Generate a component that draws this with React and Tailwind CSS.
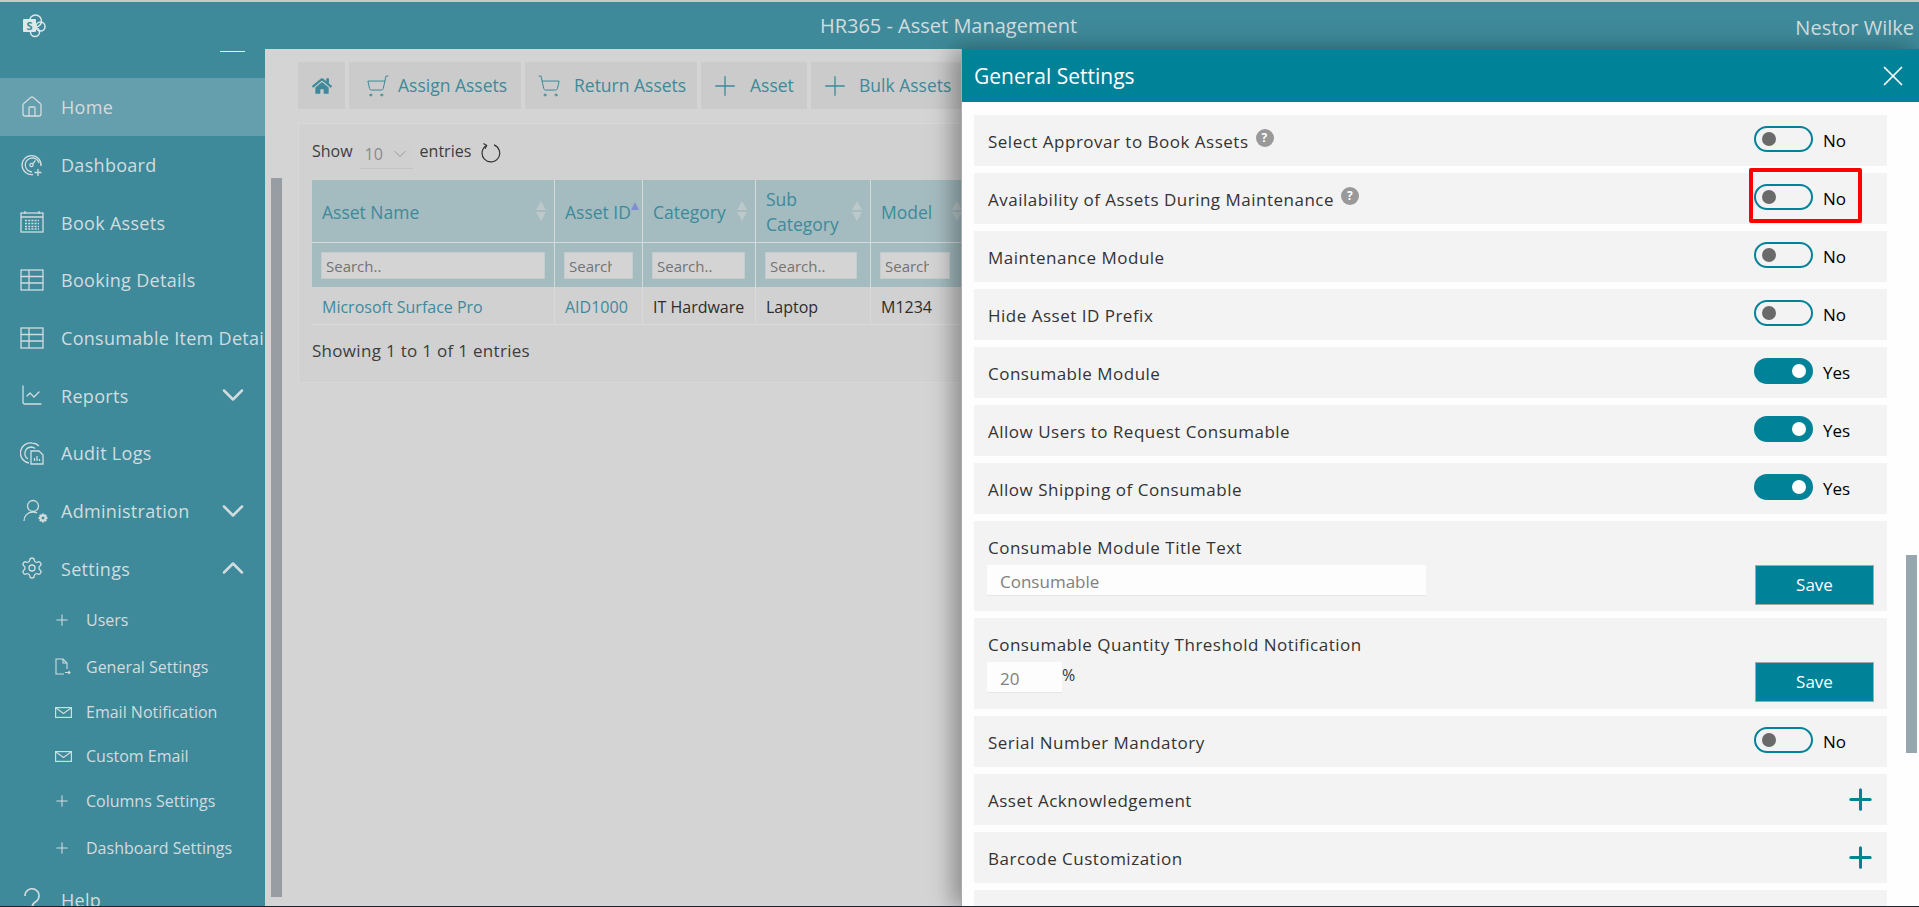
import { ChevronDown, ChevronUp, House, LineChart, Plus, Settings, ShoppingCart, X } from "lucide-react";
import { FaHome } from "react-icons/fa";

const font = { fontFamily: '"Open Sans", "Noto Sans", sans-serif' };

function DashIcon() {
  return (
    <svg width="24" height="24" viewBox="0 0 24 24" fill="none" stroke="currentColor" strokeWidth="1.3">
      <path d="M21 13a9.5 9.5 0 1 0-8 8.5" />
      <path d="M19 10a7 7 0 1 0-7 9" />
      <circle cx="11.5" cy="12" r="1.6" />
      <path d="M12.5 11l3-3.5M18 16v7M14.5 19.5h7" />
    </svg>
  );
}

function CalIcon() {
  return (
    <svg width="24" height="24" viewBox="0 0 24 24" fill="none" stroke="currentColor" strokeWidth="1.3">
      <rect x="1" y="3" width="22" height="19" />
      <path d="M1 7h22M5 1v3M19 1v3" />
      <path d="M5 10.5h14M5 13.5h14M5 16.5h14M5 19h14" strokeDasharray="2 1.2" />
    </svg>
  );
}

function GridIcon() {
  return (
    <svg width="24" height="24" viewBox="0 0 24 24" fill="none" stroke="currentColor" strokeWidth="1.3">
      <rect x="1" y="2" width="22" height="20" />
      <path d="M1 8.5h22M1 15h22M9 2v20" />
    </svg>
  );
}

function AuditIcon() {
  return (
    <svg width="24" height="24" viewBox="0 0 24 24" fill="none" stroke="currentColor" strokeWidth="1.3">
      <path d="M9 22A10 10 0 0 1 12 2c3 0 5 1 7 3" />
      <path d="M8 18a6.5 6.5 0 0 1 3-12c2 0 3 .5 4 1.5" />
      <path d="M11 10h8l4 4v9H11z" />
      <path d="M14.5 20v-3M17 20v-5M19.5 20v-2" />
    </svg>
  );
}

function AdminIcon() {
  return (
    <svg width="26" height="24" viewBox="0 0 26 24" fill="none" stroke="currentColor" strokeWidth="1.3" className="ml-[3px]">
      <circle cx="10" cy="7" r="5.5" />
      <path d="M1 22c0-5 3.5-9 9-9 1.500 0 2.800.3 4 .8" />
      <circle cx="20" cy="19" r="2.600" strokeWidth="2.200" />
      <path d="M20 14.500v1.500M20 22v1.500M15.500 19H17M23 19h1.500M16.800 15.800l1 1M22.200 21.200l1 1M23.200 15.800l-1 1M17.800 21.200l-1 1" strokeWidth="1.800" />
    </svg>
  );
}

function HelpIcon() {
  return (
    <svg width="24" height="24" viewBox="0 0 24 24" fill="none" stroke="currentColor" strokeWidth="1.6">
      <path d="M5 8a7 7 0 1 1 11 5.5c-2.500 1.500-4 3-4 6M12 22v2" />
    </svg>
  );
}

function DocIcon() {
  return (
    <svg width="16" height="17" viewBox="0 0 16 17" fill="none" stroke="currentColor" strokeWidth="1.1">
      <path d="M12 11V5L8 1H1v15h8" />
      <path d="M8 1v4h4M10 14.500h5M13.500 13l1.500 1.500-1.500 1.500" />
    </svg>
  );
}

function MailIcon() {
  return (
    <svg width="17" height="11" viewBox="0 0 17 11" fill="none" stroke="currentColor" strokeWidth="1.200">
      <rect x="0.600" y="0.600" width="15.800" height="9.800" />
      <path d="M1 1l7.500 5.500L16 1" />
    </svg>
  );
}

function Logo() {
  return (
    <svg width="24" height="24" viewBox="0 0 24 24" className="text-[#dfe7e9]">
      <circle cx="13.500" cy="7" r="6" fill="none" stroke="currentColor" strokeWidth="1.500" />
      <circle cx="18.500" cy="12.500" r="4.500" fill="none" stroke="currentColor" strokeWidth="1.500" />
      <circle cx="13" cy="18" r="4.500" fill="none" stroke="currentColor" strokeWidth="1.500" />
      <rect x="1" y="5" width="13" height="13" rx="1" fill="currentColor" />
      <text x="7.500" y="15.500" textAnchor="middle" fontSize="11" fontWeight="700" fill="#3e8a9a" style={font}>S</text>
    </svg>
  );
}

const navItems = [
  { label: "Home", icon: <House size={24} strokeWidth={1.3} />, active: true },
  { label: "Dashboard", icon: <DashIcon /> },
  { label: "Book Assets", icon: <CalIcon /> },
  { label: "Booking Details", icon: <GridIcon /> },
  { label: "Consumable Item Details", icon: <GridIcon /> },
  { label: "Reports", icon: <LineChart size={24} strokeWidth={1.3} />, arrow: "down" },
  { label: "Audit Logs", icon: <AuditIcon /> },
  { label: "Administration", icon: <AdminIcon />, arrow: "down" },
  { label: "Settings", icon: <Settings size={24} strokeWidth={1.3} />, arrow: "up" },
];

const subPlus = <Plus size={18} strokeWidth={1.4} className="-ml-[2px]" />;

const subItems = [
  { label: "Users", icon: subPlus, h: "h-[46px]" },
  { label: "General Settings", icon: <DocIcon />, h: "h-[47px]" },
  { label: "Email Notification", icon: <MailIcon />, h: "h-[44px]" },
  { label: "Custom Email", icon: <MailIcon />, h: "h-[44px]" },
  { label: "Columns Settings", icon: subPlus, h: "h-[46px]" },
  { label: "Dashboard Settings", icon: subPlus, h: "h-[48px]" },
];

function Sidebar() {
  return (
    <aside className="w-[265px] shrink-0 bg-[#3e8a9a] text-[#d2dcdf] overflow-hidden">
      <div className="h-[29px] flex justify-end pr-[20px] pt-[2px]">
        <div className="w-[25px] h-px bg-[#e8eeef]" />
      </div>
      {navItems.map((item) => (
        <div
          key={item.label}
          className={`h-[57.7px] flex items-center pl-[20px] whitespace-nowrap ${item.active ? "bg-[#659fad]" : ""}`}
        >
          <span className="w-[41px] shrink-0">{item.icon}</span>
          <span className="text-[18px] tracking-[0.3px] flex-1 pt-[2px]">{item.label}</span>
          {item.arrow === "down" && <ChevronDown size={36} strokeWidth={1.7} className="shrink-0 mr-[14px]" />}
          {item.arrow === "up" && <ChevronUp size={36} strokeWidth={1.7} className="shrink-0 mr-[14px]" />}
        </div>
      ))}
      {subItems.map((item) => (
        <div key={item.label} className={`${item.h} flex items-center pl-[55px] whitespace-nowrap`}>
          <span className="w-[31px] shrink-0">{item.icon}</span>
          <span className="text-[16px]">{item.label}</span>
        </div>
      ))}
      <div className="h-[40px] flex items-center pl-[20px] pt-[16px]">
        <span className="w-[41px] shrink-0"><HelpIcon /></span>
        <span className="text-[18px] tracking-[0.3px]">Help</span>
      </div>
    </aside>
  );
}

function ToolButton({ icon, label, w }) {
  return (
    <div className={`${w} shrink-0 h-[47px] bg-[#cbcbcb] flex items-center text-[#3e8a9a] whitespace-nowrap`}>
      {icon}
      <span className="text-[17.5px]">{label}</span>
    </div>
  );
}

function SortArrows() {
  return (
    <span className="flex flex-col gap-[2px] shrink-0">
      <span className="w-0 h-0 border-x-[5px] border-x-transparent border-b-[9px] border-b-[#bcc8ca]" />
      <span className="w-0 h-0 border-x-[5px] border-x-transparent border-t-[9px] border-t-[#bcc8ca]" />
    </span>
  );
}

const columns = [
  { title: "Asset Name", w: "w-[243px]", input: "w-[224px]", value: "Microsoft Surface Pro", link: true },
  { title: "Asset ID", w: "w-[88px]", input: "w-[69px]", value: "AID1000", link: true, asc: true },
  { title: "Category", w: "w-[113px]", input: "w-[93px]", value: "IT Hardware" },
  { title: "Sub Category", w: "w-[115px]", input: "w-[92px]", value: "Laptop" },
  { title: "Model", w: "w-[100px]", input: "w-[70px]", value: "M1234" },
];

function AssetTable() {
  return (
    <div className="flex">
      {columns.map((col) => (
        <div key={col.title} className={`${col.w} shrink-0 border-r border-[#d5dadb] flex flex-col`}>
          <div className="h-[63px] bg-[#a4bcc0] border-b border-[#d5dadb] flex items-center justify-between pl-[10px] pr-[8px] text-[17.5px] text-[#3e8a9a] leading-[25px]">
            {col.title === "Sub Category" ? (
              <span className="w-min pt-[2px]">{col.title}</span>
            ) : (
              <span className="whitespace-nowrap pt-[2px]">{col.title}</span>
            )}
            {col.asc ? (
              <span className="w-0 h-0 mb-[10px] border-x-[4px] border-x-transparent border-b-[8px] border-b-[#7f8fd0]" />
            ) : (
              <SortArrows />
            )}
          </div>
          <div className="h-[44px] bg-[#a4bcc0] flex items-center pl-[9px]">
            <div className={`${col.input} h-[27px] bg-[#d4d4d4] border border-[#c4cccd] pl-[4px] pr-[20px] pt-[1px] text-[15px] text-[#737373] leading-[25px]`}>
              <div className="overflow-hidden whitespace-nowrap">Search..</div>
            </div>
          </div>
          <div className={`h-[38px] bg-[#d1d1d1] border-b border-[#dadada] flex items-center pl-[10px] pt-[2px] text-[16px] whitespace-nowrap ${col.link ? "text-[#3e8a9a]" : "text-[#2d2d2d]"}`}>
            {col.value}
          </div>
        </div>
      ))}
    </div>
  );
}

function MainArea() {
  return (
    <main className="flex-1 bg-[#d4d4d4] flex min-w-0 overflow-hidden">
      <div className="w-[33px] shrink-0 pl-[6px] pt-[129px]">
        <div className="w-[11px] h-[719px] bg-[#979da3]" />
      </div>
      <div className="flex-1 min-w-0 pt-[13px]">
        <div className="flex gap-[4px]">
          <div className="w-[47px] shrink-0 h-[47px] bg-[#cbcbcb] flex items-center justify-center text-[#3e8a9a]">
            <FaHome size={20} />
          </div>
          <ToolButton w="w-[172px]" label="Assign Assets" icon={<ShoppingCart size={24} strokeWidth={1} className="shrink-0 ml-[17px] mr-[8px] -scale-x-100" />} />
          <ToolButton w="w-[172px]" label="Return Assets" icon={<ShoppingCart size={24} strokeWidth={1} className="shrink-0 ml-[12px] mr-[13px]" />} />
          <ToolButton w="w-[106px]" label="Asset" icon={<Plus size={32} strokeWidth={1} className="shrink-0 ml-[8px] mr-[9px]" />} />
          <ToolButton w="w-[160px]" label="Bulk Assets" icon={<Plus size={32} strokeWidth={1} className="shrink-0 ml-[8px] mr-[8px]" />} />
        </div>
        <div className="mt-[14px] h-[260px] bg-[#d1d1d1] border border-[#d8d8d8] pl-[13px] overflow-hidden">
          <div className="h-[56px] flex items-center text-[16px] text-[#3d3d3d]">
            <span className="-mt-[2px]">Show</span>
            <div className="ml-[7px] w-[53px] h-[30px] mt-[4px] bg-[#d0d0d0] border-b border-[#c4c4c4] flex items-center justify-between pl-[5px] pr-[3px] text-[#8a8a8a]">
              10
              <ChevronDown size={20} strokeWidth={1} />
            </div>
            <span className="ml-[7px] -mt-[2px]">entries</span>
            <svg width="21" height="21" viewBox="0 0 21 21" fill="none" stroke="#333" strokeWidth="1.200" className="ml-[9px] shrink-0">
              <path d="M6.500 3.500a8.800 8.800 0 1 0 7.500-.6" />
              <path d="M3.500 1.500l3.200 2L5 6.800" />
            </svg>
          </div>
          <AssetTable />
          <div className="mt-[13px] text-[17px] tracking-[0.3px] text-[#3d3d3d]">Showing 1 to 1 of 1 entries</div>
        </div>
      </div>
    </main>
  );
}

function Toggle({ on }) {
  return (
    <div className="flex items-center gap-[10px] text-[17px] text-black">
      {on ? (
        <div className="-mt-[3px] w-[59px] h-[26px] rounded-full bg-[#008299] flex items-center justify-end pr-[7px]">
          <div className="w-[14px] h-[14px] rounded-full bg-white" />
        </div>
      ) : (
        <div className="-mt-[3px] w-[59px] h-[26px] rounded-full border-2 border-[#008299] flex items-center pl-[6px]">
          <div className="w-[14px] h-[14px] rounded-full bg-[#6a6a6a]" />
        </div>
      )}
      <span>{on ? "Yes" : "No"}</span>
    </div>
  );
}

function HelpBadge() {
  return (
    <span className="ml-[7px] -mt-[7px] w-[18px] h-[18px] rounded-full bg-[#999999] text-white text-[12px] font-bold flex items-center justify-center">?</span>
  );
}

function ToggleRow({ label, on, help }) {
  return (
    <div className="h-[51px] shrink-0 bg-[#f3f3f3] flex items-center justify-between pl-[14px] pr-[27px]">
      <div className="flex items-center pt-[2px] text-[17px] tracking-[0.5px] font-medium text-[#333333]">
        {label}
        {help && <HelpBadge />}
      </div>
      <div className="w-[106px]">
        <Toggle on={on} />
      </div>
    </div>
  );
}

function InputRow({ label, h, children }) {
  return (
    <div className={`${h} shrink-0 bg-[#f3f3f3] flex justify-between pl-[13px] pr-[13px]`}>
      <div>
        <div className="h-[44px] pt-[16px] pl-[1px] text-[17px] tracking-[0.5px] font-medium text-[#333333] leading-[22px]">{label}</div>
        {children}
      </div>
      <div className="mt-[44px] w-[119px] h-[40px] bg-[#008299] border border-[#a6a6a6] text-white text-[17px] flex items-center justify-center">Save</div>
    </div>
  );
}

function PlusRow({ label }) {
  return (
    <div className="h-[51px] shrink-0 bg-[#f3f3f3] flex items-center justify-between pl-[14px] pr-[10px]">
      <span className="pt-[2px] text-[17px] tracking-[0.5px] font-medium text-[#333333]">{label}</span>
      <Plus size={33} strokeWidth={2.200} className="text-[#008299]" />
    </div>
  );
}

function SettingsPanel() {
  return (
    <section className="absolute left-[961px] top-[49px] right-0 bottom-0 bg-[#fefefe] border-l border-[#aaaaaa] shadow-[-8px_0_22px_rgba(0,0,0,0.35)] overflow-hidden">
      <div className="h-[53px] bg-[#008299] text-white flex items-center justify-between pl-[12px] pr-[9px]">
        <span className="text-[21px] pt-[2px]">General Settings</span>
        <X size={34} strokeWidth={1.200} />
      </div>
      <div className="flex">
        <div className="w-[925px] shrink-0 pl-[12px] pt-[13px] flex flex-col gap-[7px]">
          <ToggleRow label="Select Approvar to Book Assets" help />
          <ToggleRow label="Availability of Assets During Maintenance" help />
          <ToggleRow label="Maintenance Module" />
          <ToggleRow label="Hide Asset ID Prefix" />
          <ToggleRow label="Consumable Module" on />
          <ToggleRow label="Allow Users to Request Consumable" on />
          <ToggleRow label="Allow Shipping of Consumable" on />
          <InputRow label="Consumable Module Title Text" h="h-[90px]">
            <div className="w-[439px] h-[31px] bg-[#fdfdfd] border-b border-[#e6e6e6] pl-[13px] text-[17px] text-[#808080] leading-[33px]">Consumable</div>
          </InputRow>
          <InputRow label="Consumable Quantity Threshold Notification" h="h-[91px]">
            <div className="flex items-start">
              <div className="w-[75px] h-[31px] bg-[#fdfdfd] border-b border-[#e6e6e6] pl-[13px] text-[17px] text-[#808080] leading-[34px]">20</div>
              <span className="text-[16px] text-[#333333] leading-[26px]">%</span>
            </div>
          </InputRow>
          <ToggleRow label="Serial Number Mandatory" />
          <PlusRow label="Asset Acknowledgement" />
          <PlusRow label="Barcode Customization" />
          <div className="h-[51px] shrink-0 bg-[#f3f3f3] pl-[178px] pt-[16px]">
            <div className="w-[18px] h-[18px] rounded-full bg-[#999999]" />
          </div>
        </div>
        <div className="pl-[19px] pt-[453px]">
          <div className="w-[11px] h-[198px] bg-[#98a6ad]" />
        </div>
      </div>
    </section>
  );
}

export default function App() {
  return (
    <div className="relative h-[907px] overflow-hidden flex flex-col bg-[#d4d4d4]" style={font}>
      <div className="h-[2px] shrink-0 bg-[#c9c9c9]" />
      <header className="h-[47px] shrink-0 bg-[#3e8a9a] grid grid-cols-[1fr_auto_1fr] items-center pl-[22px] pr-[5px] text-[#d2dcdf]">
        <Logo />
        <span className="text-[20px] mr-[39px]">HR365 - Asset Management</span>
        <span className="text-[20px] justify-self-end mt-[4px]">Nestor Wilke</span>
      </header>
      <div className="flex-1 flex min-h-0">
        <Sidebar />
        <MainArea />
      </div>
      <SettingsPanel />
      <div className="absolute inset-x-0 bottom-0 h-px bg-[#1a2530]" />
      {/* red highlight box from the original screenshot */}
      <div className="absolute left-[1749px] top-[168px] w-[113px] h-[55px] border-[4px] border-[#ff0000] rounded-[2px]" />
    </div>
  );
}
